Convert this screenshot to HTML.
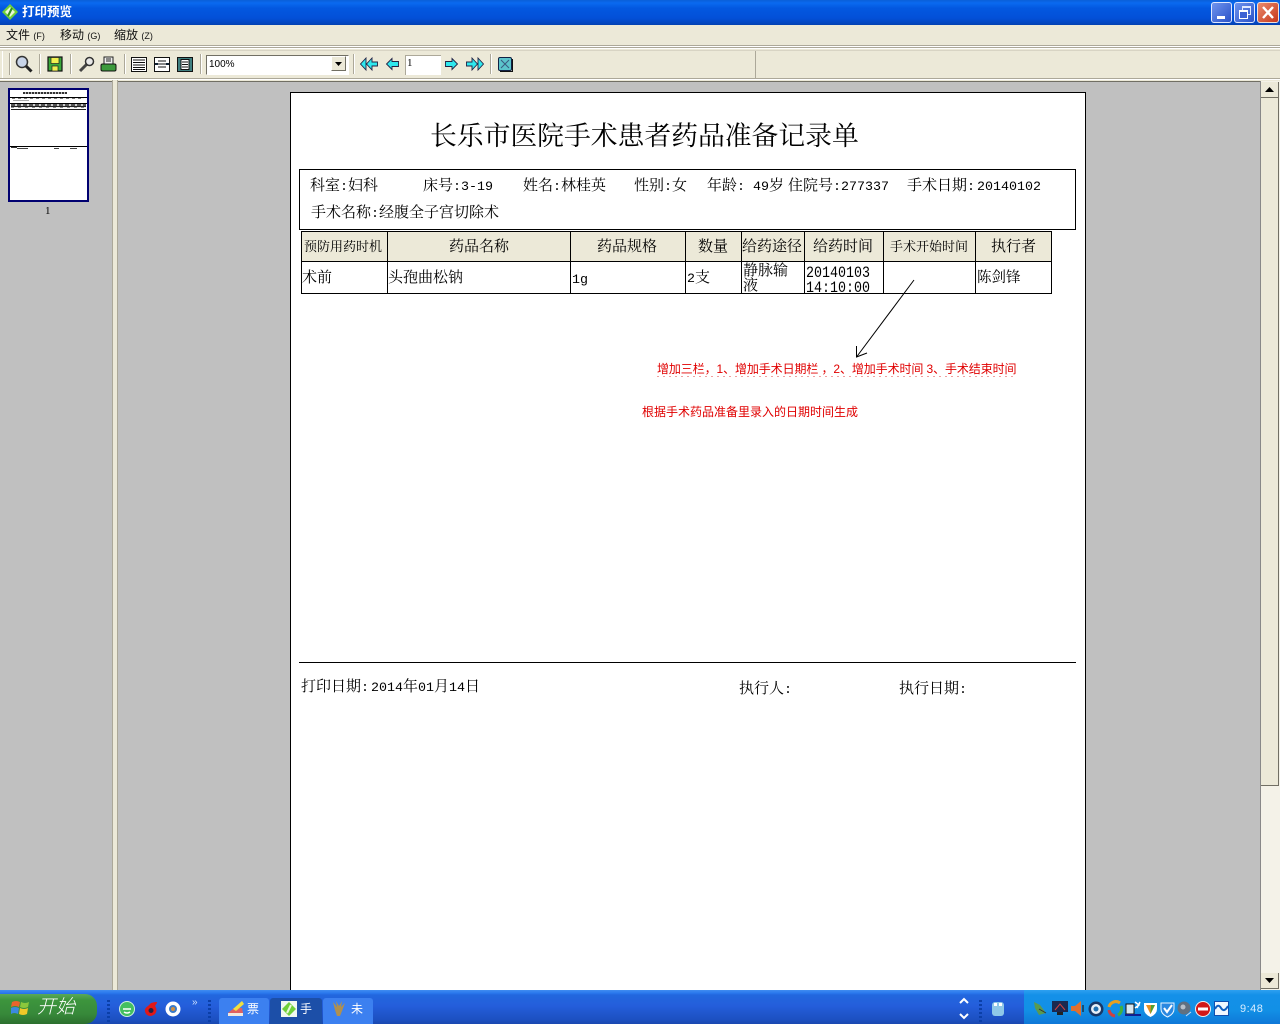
<!DOCTYPE html>
<html><head><meta charset="utf-8"><style>
html,body{margin:0;padding:0;background:#ece9d8;overflow:hidden}
#r{position:relative;width:1280px;height:1024px;overflow:hidden;font-family:"Liberation Serif","Noto Serif CJK SC",serif;color:#000}
.a{position:absolute}
.t{position:absolute;white-space:nowrap;font-size:15px;line-height:16px;font-family:"Noto Serif CJK SC",serif}
.t i{font-style:normal;font-family:"Liberation Mono",monospace;font-size:13.33px}
.s{font-family:"Liberation Sans","Noto Sans CJK SC",sans-serif}
.b{position:absolute;background:#000}
.h{position:absolute;background:#ece9d8}
.sep{position:absolute;top:54px;width:1px;height:20px;background:#aca899;border-right:1px solid #fff}
.red{position:absolute;white-space:nowrap;color:#e00000;font-size:12px;line-height:14px;font-family:"Liberation Sans","Noto Sans CJK SC",sans-serif}
svg{position:absolute;overflow:visible}
</style></head><body><div id="r">
<!-- title bar -->
<div class="a" style="left:0;top:0;width:1280px;height:25px;background:linear-gradient(#0a5fd8 0,#0a6af0 3px,#0358e0 8px,#0350d8 18px,#0346c0 23px,#0340b0 25px)"></div>
<svg style="left:2px;top:4px" width="16" height="16" viewBox="0 0 16 16"><path d="M8 0L16 8L8 16L0 8Z" fill="#6fd03a"/><path d="M8 3L13 8L8 13L3 8Z" fill="#e8f8d8"/><path d="M6 12L10 4" stroke="#2f8f20" stroke-width="2"/></svg>
<div class="t s" style="left:22px;top:4px;color:#fff;font-weight:bold;font-size:12.5px">打印预览</div>
<div class="a" style="left:1211px;top:2px;width:19px;height:19px;border:1px solid #dfe8ff;border-radius:3px;background:linear-gradient(135deg,#6f94ee,#2a52c8)"><div class="a" style="left:5px;top:13px;width:8px;height:3px;background:#fff"></div></div>
<div class="a" style="left:1234px;top:2px;width:19px;height:19px;border:1px solid #dfe8ff;border-radius:3px;background:linear-gradient(135deg,#6f94ee,#2a52c8)"><div class="a" style="left:7px;top:3px;width:7px;height:6px;border:1px solid #dfe8ff;border-top-width:2px"></div><div class="a" style="left:4px;top:7px;width:7px;height:6px;border:1px solid #fff;border-top-width:2px;background:#3c62d4"></div></div>
<div class="a" style="left:1257px;top:2px;width:20px;height:19px;border:1px solid #f0e0d8;border-radius:3px;background:linear-gradient(135deg,#e88a6c,#c8381c)"><svg style="left:4px;top:3px" width="12" height="13"><path d="M1 1L11 12M11 1L1 12" stroke="#fff" stroke-width="2.4"/></svg></div>
<!-- menu -->
<div class="a" style="left:0;top:25px;width:1280px;height:20px;background:#ece9d8"></div>
<div class="t s" style="left:6px;top:28px;font-size:12px;line-height:14px;color:#111">文件 <span style="font-size:9px">(F)</span></div>
<div class="t s" style="left:60px;top:28px;font-size:12px;line-height:14px;color:#111">移动 <span style="font-size:9px">(G)</span></div>
<div class="t s" style="left:114px;top:28px;font-size:12px;line-height:14px;color:#111">缩放 <span style="font-size:9px">(Z)</span></div>
<!-- toolbar -->
<div class="a" style="left:0;top:45px;width:1280px;height:1px;background:#aca899"></div>
<div class="a" style="left:0;top:46px;width:1280px;height:1px;background:#fff"></div>
<div class="a" style="left:0;top:47px;width:1280px;height:1px;background:#aca899"></div>
<div class="a" style="left:0;top:48px;width:1280px;height:1px;background:#fff"></div>
<div class="a" style="left:2px;top:50px;width:752px;height:27px;border-top:1px solid #fff;border-right:1px solid #aca899;border-left:1px solid #fff"></div>
<div class="a" style="left:0;top:50px;width:1280px;height:1px;background:#d8d4c4"></div>
<div class="a" style="left:0;top:78px;width:1280px;height:1px;background:#aca899"></div>
<div class="a" style="left:0;top:79px;width:1280px;height:1px;background:#fff"></div>
<div class="a" style="left:9px;top:53px;width:1px;height:22px;background:#aca899;border-right:1px solid #fff"></div>
<svg style="left:15px;top:55px" width="18" height="18" viewBox="0 0 18 18"><circle cx="7" cy="7" r="5.5" fill="#c8d4e8" stroke="#333" stroke-width="1.5"/><path d="M11 11L16.5 16.5" stroke="#222" stroke-width="3"/></svg>
<div class="sep" style="left:39px"></div>
<svg style="left:47px;top:56px" width="16" height="16" viewBox="0 0 16 16"><rect x="1" y="1" width="14" height="14" fill="#3aa83a" stroke="#111" stroke-width="1.2"/><rect x="4" y="1.5" width="8" height="6" fill="#f0f050" stroke="#222" stroke-width=".7"/><rect x="5" y="10" width="6" height="5" fill="#f0f050" stroke="#222" stroke-width=".7"/></svg>
<div class="sep" style="left:70px"></div>
<svg style="left:78px;top:56px" width="17" height="17" viewBox="0 0 17 17"><path d="M2 15L9 8" stroke="#444" stroke-width="3"/><circle cx="11.5" cy="5.5" r="4" fill="#e8e8e8" stroke="#333" stroke-width="1.5"/></svg>
<svg style="left:100px;top:56px" width="17" height="16" viewBox="0 0 17 16"><rect x="4" y="1" width="9" height="7" fill="#eee" stroke="#222"/><path d="M6 3H11M6 5H11" stroke="#222"/><rect x="1" y="8" width="15" height="7" rx="1.5" fill="#3c9a3c" stroke="#111"/></svg>
<div class="sep" style="left:124px"></div>
<svg style="left:131px;top:57px" width="16" height="15" viewBox="0 0 16 15"><rect x=".5" y=".5" width="15" height="14" fill="#fff" stroke="#111"/><path d="M2 3H14M2 5.5H14M2 8H14M2 10.500H14M2 12.500H14" stroke="#111"/></svg>
<svg style="left:154px;top:57px" width="16" height="15" viewBox="0 0 16 15"><rect x=".5" y=".5" width="15" height="14" fill="#fff" stroke="#111"/><path d="M4 4H12M4 7H12M4 10H12" stroke="#111"/><path d="M1 7H4M15 7H12" stroke="#123" stroke-width="2"/></svg>
<svg style="left:177px;top:57px" width="16" height="15" viewBox="0 0 16 15"><rect x=".5" y=".5" width="15" height="14" fill="#3f7f80" stroke="#111"/><rect x="4" y="2.500" width="8" height="10" fill="#fff" stroke="#111"/><path d="M5 5H11M5 7.500H11M5 10H11" stroke="#111"/></svg>
<div class="sep" style="left:200px"></div>
<!-- combo -->
<div class="a" style="left:206px;top:55px;width:141px;height:18px;background:#fff;border-top:1px solid #716f64;border-left:1px solid #716f64;border-bottom:1px solid #fff;border-right:1px solid #fff"></div>
<div class="t" style="left:209px;top:58px;font-family:'Liberation Sans',sans-serif;font-size:10px;line-height:13px">100%</div>
<div class="a" style="left:331px;top:56px;width:15px;height:15px;background:#ece9d8;border:1px solid #fff;border-right-color:#716f64;border-bottom-color:#716f64;box-sizing:border-box"></div>
<svg style="left:335px;top:62px" width="8" height="4"><path d="M0 0H7L3.500 4Z" fill="#000"/></svg>
<div class="sep" style="left:353px"></div>
<svg style="left:360px;top:57px" width="18" height="14" viewBox="0 0 18 14"><path d="M6 1L.5 7L6 13V1ZM12 1L6.500 7L12 13V9H17.500V5H12Z" fill="#2fe8ee" stroke="#224" stroke-width=".9"/></svg>
<svg style="left:386px;top:58px" width="13" height="12" viewBox="0 0 13 12"><path d="M6 .5L.5 6L6 11.500V8.500H12.500V3.500H6Z" fill="#2fe8ee" stroke="#224" stroke-width=".9"/></svg>
<div class="a" style="left:405px;top:55px;width:35px;height:19px;background:#fff;border-top:1px solid #aca899;border-left:1px solid #aca899"></div>
<div class="t" style="left:407px;top:57px;font-size:11px;line-height:13px;font-family:'Liberation Serif',serif">1</div>
<svg style="left:445px;top:58px" width="13" height="12" viewBox="0 0 13 12"><path d="M7 .5L12.500 6L7 11.500V8.500H.5V3.500H7Z" fill="#2fe8ee" stroke="#224" stroke-width=".9"/></svg>
<svg style="left:466px;top:57px" width="18" height="14" viewBox="0 0 18 14"><path d="M12 1L17.500 7L12 13V1ZM6 1L11.500 7L6 13V9H.5V5H6Z" fill="#2fe8ee" stroke="#224" stroke-width=".9"/></svg>
<div class="sep" style="left:490px"></div>
<svg style="left:498px;top:57px" width="15" height="15" viewBox="0 0 15 15"><rect x=".5" y=".5" width="13" height="13" rx="1.500" fill="#5cc4cc" stroke="#124"/><path d="M3 3L11 11M11 3L3 11" stroke="#3a5a80"/><path d="M14.500 2V14.500H2" stroke="#111" fill="none"/></svg>
<!-- workspace -->
<div class="a" style="left:0;top:81px;width:112px;height:909px;background:#c0c0c0;border-top:1px solid #716f64;box-sizing:border-box"></div>
<div class="a" style="left:112px;top:80px;width:6px;height:910px;background:#ece9d8;border-left:1px solid #aca899;border-right:1px solid #aca899;box-sizing:border-box"></div>
<div class="a" style="left:118px;top:81px;width:1142px;height:909px;background:#c0c0c0;border-top:1px solid #716f64;box-sizing:border-box"></div>
<!-- thumbnail -->
<div class="a" style="left:8px;top:88px;width:81px;height:114px;background:#fff;border:2px solid #000070;box-sizing:border-box"></div>
<div class="a" style="left:23px;top:92px;width:44px;height:2px;background:repeating-linear-gradient(90deg,#333 0 2px,#bbb 2px 3px)"></div>
<div class="a" style="left:10px;top:97px;width:77px;height:1px;background:#000"></div>
<div class="a" style="left:12px;top:98px;width:72px;height:1px;background:repeating-linear-gradient(90deg,#777 0 3px,#eee 3px 6px)"></div>
<div class="a" style="left:13px;top:100px;width:16px;height:1px;background:#aaa"></div>
<div class="a" style="left:10px;top:103px;width:77px;height:1px;background:#000"></div>
<div class="a" style="left:11px;top:104px;width:75px;height:2px;background:repeating-linear-gradient(90deg,#555 0 4px,#ccc 4px 6px)"></div>
<div class="a" style="left:11px;top:106px;width:75px;height:1px;background:#222"></div>
<div class="a" style="left:11px;top:107px;width:75px;height:1px;background:repeating-linear-gradient(90deg,#888 0 3px,#eee 3px 7px)"></div>
<div class="a" style="left:11px;top:109px;width:75px;height:1px;background:#222"></div>
<div class="a" style="left:10px;top:146px;width:77px;height:1px;background:#000"></div>
<div class="a" style="left:11px;top:147px;width:6px;height:1px;background:#333"></div>
<div class="a" style="left:17px;top:148px;width:11px;height:1px;background:#444"></div>
<div class="a" style="left:54px;top:148px;width:5px;height:1px;background:#444"></div>
<div class="a" style="left:70px;top:148px;width:7px;height:1px;background:#444"></div>
<div class="t" style="left:45px;top:204px;font-size:11px;line-height:14px;font-family:'Liberation Serif',serif">1</div>
<!-- page -->
<div class="a" style="left:290px;top:92px;width:796px;height:898px;background:#fff;border:1px solid #000;border-bottom:0;box-sizing:border-box"></div>
<div class="t" style="left:430px;top:118px;font-size:26.800px;line-height:32px;font-family:'Noto Serif CJK SC',serif;color:#000">长乐市医院手术患者药品准备记录单</div>
<!-- header box -->
<div class="a" style="left:299px;top:169px;width:777px;height:61px;border:1px solid #000;box-sizing:border-box"></div>
<div class="t" style="left:310px;top:177px">科室<i>:</i>妇科</div>
<div class="t" style="left:423px;top:177px">床号<i>:3-19</i></div>
<div class="t" style="left:523px;top:177px">姓名<i>:</i>林桂英</div>
<div class="t" style="left:634px;top:177px">性别<i>:</i>女</div>
<div class="t" style="left:707px;top:177px">年龄<i>:</i></div>
<div class="t" style="left:753px;top:177px"><i>49</i>岁</div>
<div class="t" style="left:788px;top:177px">住院号<i>:277337</i></div>
<div class="t" style="left:907px;top:177px">手术日期<i>:</i></div>
<div class="t" style="left:977px;top:177px"><i>20140102</i></div>
<div class="t" style="left:311px;top:204px">手术名称<i>:</i>经腹全子宫切除术</div>
<!-- table -->
<div class="h" style="left:302px;top:232px;width:749px;height:30px"></div>
<div class="b" style="left:301px;top:231px;width:751px;height:1px"></div>
<div class="b" style="left:301px;top:261px;width:751px;height:1px"></div>
<div class="b" style="left:301px;top:293px;width:751px;height:1px"></div>
<div class="b" style="left:301px;top:231px;width:1px;height:63px"></div>
<div class="b" style="left:387px;top:231px;width:1px;height:63px"></div>
<div class="b" style="left:570px;top:231px;width:1px;height:63px"></div>
<div class="b" style="left:685px;top:231px;width:1px;height:63px"></div>
<div class="b" style="left:741px;top:231px;width:1px;height:63px"></div>
<div class="b" style="left:804px;top:231px;width:1px;height:63px"></div>
<div class="b" style="left:883px;top:231px;width:1px;height:63px"></div>
<div class="b" style="left:975px;top:231px;width:1px;height:63px"></div>
<div class="b" style="left:1051px;top:231px;width:1px;height:63px"></div>
<div class="t" style="left:304px;top:238px;font-size:13px">预防用药时机</div>
<div class="t" style="left:449px;top:238px">药品名称</div>
<div class="t" style="left:597px;top:238px">药品规格</div>
<div class="t" style="left:698px;top:238px">数量</div>
<div class="t" style="left:742px;top:238px">给药途径</div>
<div class="t" style="left:813px;top:238px">给药时间</div>
<div class="t" style="left:890px;top:238px;font-size:13px">手术开始时间</div>
<div class="t" style="left:991px;top:238px">执行者</div>
<div class="t" style="left:302px;top:269px">术前</div>
<div class="t" style="left:388px;top:269px">头孢曲松钠</div>
<div class="t" style="left:572px;top:270px;font-size:13px"><i>1g</i></div>
<div class="t" style="left:687px;top:269px"><i>2</i>支</div>
<div class="t" style="left:743px;top:262px">静脉输</div>
<div class="t" style="left:743px;top:277px">液</div>
<div class="t" style="left:806px;top:262px;line-height:15px;transform:scaleY(1.15);transform-origin:0 0"><i>20140103</i></div>
<div class="t" style="left:806px;top:277px;line-height:15px;transform:scaleY(1.15);transform-origin:0 0"><i>14:10:00</i></div>
<div class="t" style="left:977px;top:269px;font-size:14.500px">陈剑锋</div>
<!-- arrow -->
<svg style="left:850px;top:275px" width="70" height="90"><path d="M64 5L6.500 82M6.500 71L6.500 82L17 78" fill="none" stroke="#000" stroke-width="1"/></svg>
<div class="red" style="left:657px;top:362px;letter-spacing:-.1px">增加三栏，1、增加手术日期栏 ，2、增加手术时间 3、手术结束时间</div>
<div class="a" style="left:657px;top:376px;width:360px;height:1px;background:repeating-linear-gradient(90deg,#f0a0a0 0 2px,transparent 2px 6px)"></div>
<div class="red" style="left:642px;top:405px">根据手术药品准备里录入的日期时间生成</div>
<!-- footer -->
<div class="b" style="left:299px;top:662px;width:777px;height:1px"></div>
<div class="t" style="left:301px;top:678px">打印日期<i>:</i></div>
<div class="t" style="left:371px;top:678px"><i>2014</i>年<i>01</i>月<i>14</i>日</div>
<div class="t" style="left:739px;top:680px">执行人<i>:</i></div>
<div class="t" style="left:899px;top:680px">执行日期<i>:</i></div>
<!-- scrollbar -->
<div class="a" style="left:1260px;top:81px;width:20px;height:909px;background:#f4f2e8"></div>
<div class="a" style="left:1260px;top:81px;width:1px;height:909px;background:#888"></div>
<div class="a" style="left:1261px;top:82px;width:18px;height:16px;background:#ece9d8;border-right:1px solid #716f64;border-bottom:1px solid #716f64;box-sizing:border-box"></div>
<svg style="left:1265px;top:87px" width="9" height="5"><path d="M4.500 0L9 5H0Z" fill="#000"/></svg>
<div class="a" style="left:1261px;top:98px;width:18px;height:688px;background:#ece9d8;border-right:1px solid #716f64;border-bottom:1px solid #716f64;box-sizing:border-box"></div>
<div class="a" style="left:1261px;top:973px;width:18px;height:16px;background:#ece9d8;border-right:1px solid #716f64;border-bottom:1px solid #716f64;box-sizing:border-box"></div>
<svg style="left:1265px;top:978px" width="9" height="5"><path d="M0 0H9L4.500 5Z" fill="#000"/></svg>
<!-- taskbar -->
<div class="a" style="left:0;top:990px;width:1280px;height:34px;background:linear-gradient(#3f8cf0 0,#2a78ee 3px,#2267de 5px,#245edb 16px,#1c50c0 30px,#1a48b0 34px)"></div>
<div class="a" style="left:0;top:994px;width:97px;height:30px;border-radius:0 12px 12px 0;background:linear-gradient(#5aa85a 0,#3d953d 6px,#37893a 20px,#2c6f2e 30px)"></div>
<svg style="left:11px;top:999px" width="19" height="18" viewBox="0 0 19 18"><path d="M1 3Q5 1 9 3L8 8Q4 6 0 8Z" fill="#e8642c"/><path d="M10 3Q14 5 18 3L17 8Q13 10 9 8Z" fill="#8bc83c"/><path d="M0 9Q4 7 8 9L7 15Q3 13 0 15Z" fill="#3c8ae0"/><path d="M9 9Q13 11 17 9L16 15Q12 17 8 15Z" fill="#f0c828"/></svg>
<div class="t s" style="left:37px;top:997px;color:#fff;font-size:19px;line-height:22px;font-style:italic;font-weight:300">开始</div>
<div class="a" style="left:107px;top:1000px;width:3px;height:22px;background:repeating-linear-gradient(#0b3fa8 0 2px,transparent 2px 4px)"></div>
<svg style="left:119px;top:1001px" width="16" height="16"><circle cx="8" cy="8" r="7.500" fill="#44c060" stroke="#d0f0e0"/><path d="M4 8H12M5 11Q8 13 11 11" stroke="#fff" stroke-width="1.500" fill="none"/></svg>
<svg style="left:143px;top:1001px" width="16" height="16"><path d="M8 2Q15 0 14 2L12 5Q15 9 12 13Q7 17 3 13Q0 8 5 5Z" fill="#e01818"/><circle cx="8" cy="9.500" r="2.500" fill="#224"/></svg>
<svg style="left:165px;top:1001px" width="16" height="16"><circle cx="8" cy="8" r="7.500" fill="#fff"/><circle cx="8" cy="8" r="4" fill="#3a7ac8"/><circle cx="8" cy="8" r="2" fill="#d09040"/></svg>
<div class="t s" style="left:192px;top:998px;color:#cfe0ff;font-size:10px;line-height:10px">»</div>
<div class="a" style="left:208px;top:1000px;width:3px;height:22px;background:repeating-linear-gradient(#0b3fa8 0 2px,transparent 2px 4px)"></div>
<div class="a" style="left:219px;top:998px;width:50px;height:26px;background:#3c80f0;border-radius:3px 3px 0 0"></div>
<svg style="left:227px;top:1000px" width="18" height="17"><path d="M1 13L7 8H15L16 13Z" fill="#e06060"/><path d="M6 9L15 1L17 4L9 11Z" fill="#f0e040"/><rect x="1" y="13" width="15" height="3" fill="#f0e8e0"/></svg>
<div class="t s" style="left:247px;top:1002px;color:#fff;font-size:12px;line-height:14px">票</div>
<div class="a" style="left:270px;top:998px;width:52px;height:26px;background:#1c4fa8;border-radius:3px 3px 0 0"></div>
<svg style="left:281px;top:1001px" width="16" height="16" viewBox="0 0 16 16"><rect width="16" height="16" fill="#f0f8f0"/><path d="M8 1L15 8L8 15L1 8Z" fill="#6fd03a"/><path d="M6 12L10 4" stroke="#e8f8d8" stroke-width="2"/></svg>
<div class="t s" style="left:300px;top:1002px;color:#fff;font-size:12px;line-height:14px">手</div>
<div class="a" style="left:323px;top:998px;width:50px;height:26px;background:#3c80f0;border-radius:3px 3px 0 0"></div>
<svg style="left:332px;top:1000px" width="14" height="18"><path d="M1 2L5 7L4 1L7 6L10 1L9 7L13 3L10 11L8 16H5L3 10Z" fill="#b09050"/></svg>
<div class="t s" style="left:351px;top:1002px;color:#fff;font-size:12px;line-height:14px">未</div>
<!-- scroll arrows & tray -->
<svg style="left:957px;top:995px" width="14" height="28"><path d="M3 8L7 4L11 8" stroke="#fff" stroke-width="2" fill="none"/><path d="M3 19L7 23L11 19" stroke="#fff" stroke-width="2" fill="none"/></svg>
<div class="a" style="left:979px;top:1000px;width:3px;height:22px;background:repeating-linear-gradient(#0b3fa8 0 2px,transparent 2px 4px)"></div>
<svg style="left:991px;top:1001px" width="14" height="16"><rect x="1" y="1" width="12" height="14" rx="3" fill="#8fc8e8"/><rect x="3" y="2" width="3" height="3" fill="#fff"/><rect x="8" y="2" width="3" height="3" fill="#fff"/></svg>
<div class="a" style="left:1024px;top:990px;width:256px;height:34px;background:linear-gradient(#2ea0f0 0,#1490e8 5px,#1290e6 20px,#0f78d8 34px)"></div>
<svg style="left:1032px;top:1000px" width="16" height="16"><path d="M2 2L8 5L14 13L7 15L3 8Z" fill="#5a9a50"/><path d="M7 9L14 13" stroke="#333"/></svg>
<svg style="left:1052px;top:1001px" width="16" height="15"><rect width="16" height="11" fill="#1a2850"/><path d="M3 9L8 3L13 9" stroke="#d04040" fill="none"/><rect x="5" y="11" width="6" height="3" fill="#222"/></svg>
<svg style="left:1071px;top:1001px" width="14" height="15"><path d="M0 5H4L10 0V15L4 10H0Z" fill="#e07030"/><path d="M12 4V11" stroke="#234" stroke-width="1.500"/></svg>
<svg style="left:1088px;top:1001px" width="16" height="16"><circle cx="8" cy="8" r="7.500" fill="#183868"/><circle cx="8" cy="8" r="5" fill="#e8f0f8"/><circle cx="8" cy="8" r="2.500" fill="#2070b0"/></svg>
<svg style="left:1107px;top:1001px" width="16" height="16"><path d="M2 6A7 7 0 0 1 13 2" stroke="#e8a020" stroke-width="3" fill="none"/><path d="M14 5A7 7 0 0 1 11 14" stroke="#40b040" stroke-width="3" fill="none"/><path d="M8 15A7 7 0 0 1 2 9" stroke="#d04040" stroke-width="3" fill="none"/></svg>
<svg style="left:1125px;top:1001px" width="17" height="16"><rect x="1" y="3" width="8" height="10" fill="#d8e8f0" stroke="#111"/><path d="M10 1L14 4L10 7M12 7L15 1" stroke="#fff" stroke-width="1.500" fill="none"/><rect x="0" y="13" width="16" height="2" fill="#102090"/></svg>
<svg style="left:1143px;top:1001px" width="15" height="16"><path d="M1 2H14V8Q14 13 7.500 16Q1 13 1 8Z" fill="#fff"/><path d="M3 4L7.500 13L12 4Z" fill="#e89020"/><path d="M7.500 13L12 4L8 4Z" fill="#50a030"/></svg>
<svg style="left:1160px;top:1001px" width="15" height="16"><path d="M1 2H14V8Q14 13 7.500 16Q1 13 1 8Z" fill="#2a88e0" stroke="#e8f4ff"/><path d="M4 7L7 11L12 4" stroke="#fff" stroke-width="2" fill="none"/></svg>
<svg style="left:1177px;top:1001px" width="15" height="16"><circle cx="7" cy="7" r="6.500" fill="#607080"/><circle cx="6" cy="6" r="2.500" fill="#b8c0c8"/><path d="M9 15L14 11" stroke="#d0d8e8"/></svg>
<svg style="left:1195px;top:1001px" width="16" height="16"><circle cx="8" cy="8" r="7.500" fill="#d01818" stroke="#f0f0f0"/><rect x="3" y="6.500" width="10" height="3" fill="#fff"/></svg>
<svg style="left:1214px;top:1001px" width="15" height="15"><rect x=".5" y=".5" width="14" height="14" fill="#f0f8ff" stroke="#1050b0"/><path d="M1 8Q4 2 7 7T14 5" stroke="#1060c0" stroke-width="2" fill="none"/></svg>
<div class="t s" style="left:1240px;top:1002px;color:#d8ecff;font-size:11px;line-height:14px;letter-spacing:.5px">9:48</div>
</div></body></html>
